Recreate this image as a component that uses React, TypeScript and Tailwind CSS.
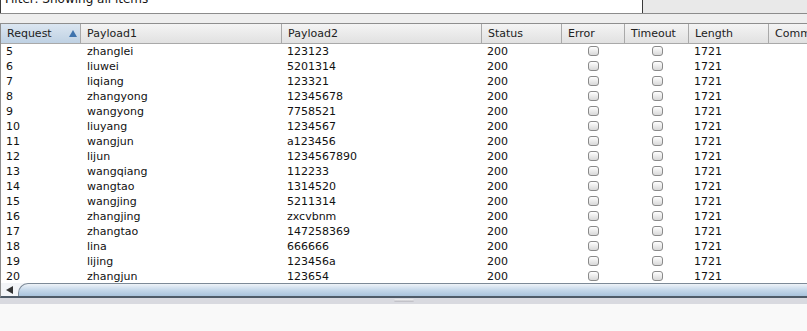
const rows: [string, string, string][] = [
  ["5", "zhanglei", "123123"],
  ["6", "liuwei", "5201314"],
  ["7", "liqiang", "123321"],
  ["8", "zhangyong", "12345678"],
  ["9", "wangyong", "7758521"],
  ["10", "liuyang", "1234567"],
  ["11", "wangjun", "a123456"],
  ["12", "lijun", "1234567890"],
  ["13", "wangqiang", "112233"],
  ["14", "wangtao", "1314520"],
  ["15", "wangjing", "5211314"],
  ["16", "zhangjing", "zxcvbnm"],
  ["17", "zhangtao", "147258369"],
  ["18", "lina", "666666"],
  ["19", "lijing", "123456a"],
  ["20", "zhangjun", "123654"],
];

const cols = "grid grid-cols-[80px_201px_200px_80px_63px_64px_80px_120px]";

const Check = () => (
  <div className="mx-auto mt-[2px] h-[10px] w-[11px] rounded-[3px] border border-[#8a8a8a] bg-gradient-to-b from-[#ffffff] to-[#d8d8d8]" />
);

const Head = ({ label, sorted }: { label: string; sorted?: boolean }) => (
  <div
    className={
      "flex items-center justify-between border-r border-[#a9a9a9] px-[6px] " +
      (sorted
        ? "bg-gradient-to-b from-[#dbe6f1] to-[#bfd1e3]"
        : "bg-gradient-to-b from-[#f4f4f4] to-[#e1e1e1]")
    }
  >
    <span>{label}</span>
    {sorted && (
      <span className="mr-[-3px] h-0 w-0 border-x-[4px] border-b-[7px] border-x-transparent border-b-[#3f73ad]" />
    )}
  </div>
);

export default function App() {
  return (
    <div className="h-[331px] w-[807px] overflow-hidden bg-[#eeeeee] font-['DejaVu_Sans',sans-serif] text-[11px] text-[#111]">
      <div className="flex h-[14px] overflow-hidden border-b border-[#8c8c8c]">
        <div className="w-[643px] border-l border-r border-[#3a3a3a] bg-white pl-[4px]">
          <div className="-mt-[7px] text-[12px] leading-[13px]">Filter: Showing all items</div>
        </div>
        <div className="flex-1 bg-[#e9e9e9]" />
      </div>
      <div className="h-[9px]" />
      <div className="border-l border-t border-[#8e8e8e] bg-white">
        <div className={cols + " h-[20px] border-b border-[#a9a9a9] leading-[19px] text-[#222]"}>
          <Head label="Request" sorted />
          <Head label="Payload1" />
          <Head label="Payload2" />
          <Head label="Status" />
          <Head label="Error" />
          <Head label="Timeout" />
          <Head label="Length" />
          <Head label="Comment" />
        </div>
        <div className="h-[239px] overflow-hidden">
          {rows.map(([n, p1, p2]) => (
            <div key={n} className={cols + " h-[15px] leading-[15px]"}>
              <div className="pl-[5px]">{n}</div>
              <div className="pl-[6px]">{p1}</div>
              <div className="pl-[5px]">{p2}</div>
              <div className="pl-[5px]">200</div>
              <div><Check /></div>
              <div><Check /></div>
              <div className="pl-[5px]">1721</div>
              <div />
            </div>
          ))}
        </div>
      </div>
      <div className="flex h-[15px] border-b-2 border-[#4e5b68] border-l border-l-[#8e8e8e] bg-[#f3f5f8]">
        <div className="flex w-[17px] items-center justify-center">
          <span className="h-0 w-0 border-y-[4px] border-r-[7px] border-y-transparent border-r-[#333]" />
        </div>
        <div className="flex-1 rounded-tl-[10px] border-l border-t border-[#7d8a98] bg-gradient-to-b from-[#eef3f8] via-[#c5d8ea] to-[#a9c3dc]" />
      </div>
      <div className="flex h-[6px] justify-center bg-[#d9dae0]">
        <div className="mt-[1px] h-[3px] w-[20px] rounded-sm bg-gradient-to-b from-[#f4f4f4] to-[#b8b8c0]" />
      </div>
      <div className="h-full bg-[#f9f9f9]" />
    </div>
  );
}
